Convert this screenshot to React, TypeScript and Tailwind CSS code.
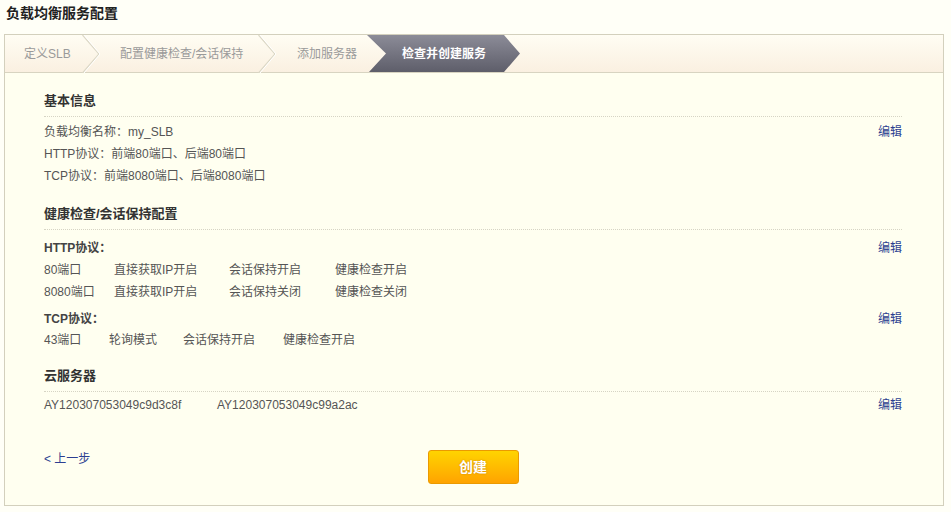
const font = { fontFamily: '"Liberation Sans", "Noto Sans CJK SC", sans-serif' };

function Chevron() {
  return (
    <svg width="18" height="38" viewBox="0 0 18 38" className="shrink-0">
      <polyline points="0.5,0 17,19 0.5,38" fill="none" stroke="#dcd8c6" strokeWidth="1.2" />
      <polyline points="2,0 18,19 2,38" fill="none" stroke="#ffffff" strokeWidth="1" />
    </svg>
  );
}

function Section(props: { title: string; children: React.ReactNode; className?: string }) {
  return (
    <div className={props.className}>
      <div className="h-[22px] leading-[22px] font-bold text-[#333] text-[13px] pb-[4px] box-content border-b border-dotted border-[#d6d4c4]">
        {props.title}
      </div>
      {props.children}
    </div>
  );
}

function EditLink() {
  return <a className="text-[#2d3f91] cursor-pointer">编辑</a>;
}

export default function App() {
  return (
    <div className="w-[951px] h-[512px] bg-[#fffff7] text-[12px] overflow-hidden" style={font}>
      <div className="pl-[6px] pt-[3px] h-[34px] text-[14px] font-bold text-[#222] leading-[20px]">
        负载均衡服务配置
      </div>
      <div className="ml-[4px] w-[940px] h-[472px] border border-[#d3d0bd] bg-[#fffff0]">
        {/* steps */}
        <div className="flex h-[38px] border-b border-[#d8d4c1] bg-gradient-to-b from-[#fffdf3] to-[#faf0e1] text-[#9a9a9a] leading-[38px]">
          <div className="w-[77px] pl-[19px] shrink-0">定义SLB</div>
          <Chevron />
          <div className="w-[158px] pl-[20px] shrink-0">配置健康检查/会话保持</div>
          <Chevron />
          <div className="w-[91px] pl-[21px] shrink-0">添加服务器</div>
          <div className="w-[153px] pl-[35px] shrink-0 text-white font-bold bg-gradient-to-b from-[#8c8c98] to-[#5e5e6a] [clip-path:polygon(0_0,137px_0,100%_50%,137px_100%,2px_100%,19px_50%)]">
            检查并创建服务
          </div>
        </div>

        <div className="pl-[39px] pr-[41px] text-[#555]">
          <Section title="基本信息" className="pt-[17px]">
            <div className="mt-[4px] leading-[22px]">
              <div className="flex justify-between">
                <span>负载均衡名称：my_SLB</span>
                <EditLink />
              </div>
              <div>HTTP协议：前端80端口、后端80端口</div>
              <div>TCP协议：前端8080端口、后端8080端口</div>
            </div>
          </Section>

          <Section title="健康检查/会话保持配置" className="mt-[16px]">
            <div className="mt-[7px] leading-[22px]">
              <div className="flex justify-between font-bold text-[#444]">
                <span>HTTP协议：</span>
                <span className="font-normal"><EditLink /></span>
              </div>
              <div className="grid grid-cols-[70px_115px_106px_auto]">
                <span>80端口</span>
                <span>直接获取IP开启</span>
                <span>会话保持开启</span>
                <span>健康检查开启</span>
              </div>
              <div className="grid grid-cols-[70px_115px_106px_auto]">
                <span>8080端口</span>
                <span>直接获取IP开启</span>
                <span>会话保持关闭</span>
                <span>健康检查关闭</span>
              </div>
              <div className="flex justify-between font-bold text-[#444] mt-[5px]">
                <span>TCP协议：</span>
                <span className="font-normal"><EditLink /></span>
              </div>
              <div className="grid grid-cols-[65px_74px_100px_auto] -mt-[1px]">
                <span>43端口</span>
                <span>轮询模式</span>
                <span>会话保持开启</span>
                <span>健康检查开启</span>
              </div>
            </div>
          </Section>

          <Section title="云服务器" className="mt-[14px]">
            <div className="mt-[2px] leading-[22px] flex justify-between">
              <div className="flex">
                <span className="w-[173px]">AY120307053049c9d3c8f</span>
                <span>AY120307053049c99a2ac</span>
              </div>
              <EditLink />
            </div>
          </Section>

          <div className="mt-[34px] grid grid-cols-[1fr_auto_1fr] items-start">
            <a className="text-[#2d3f91] leading-[18px] cursor-pointer">&lt; 上一步</a>
            <button className="w-[91px] h-[34px] rounded-[3px] border border-[#eb9a00] bg-gradient-to-b from-[#ffd400] to-[#ffa300] text-white font-bold text-[14px] [text-shadow:0_0_2px_#c98000]">
              创建
            </button>
            <div />
          </div>
        </div>
      </div>
    </div>
  );
}
